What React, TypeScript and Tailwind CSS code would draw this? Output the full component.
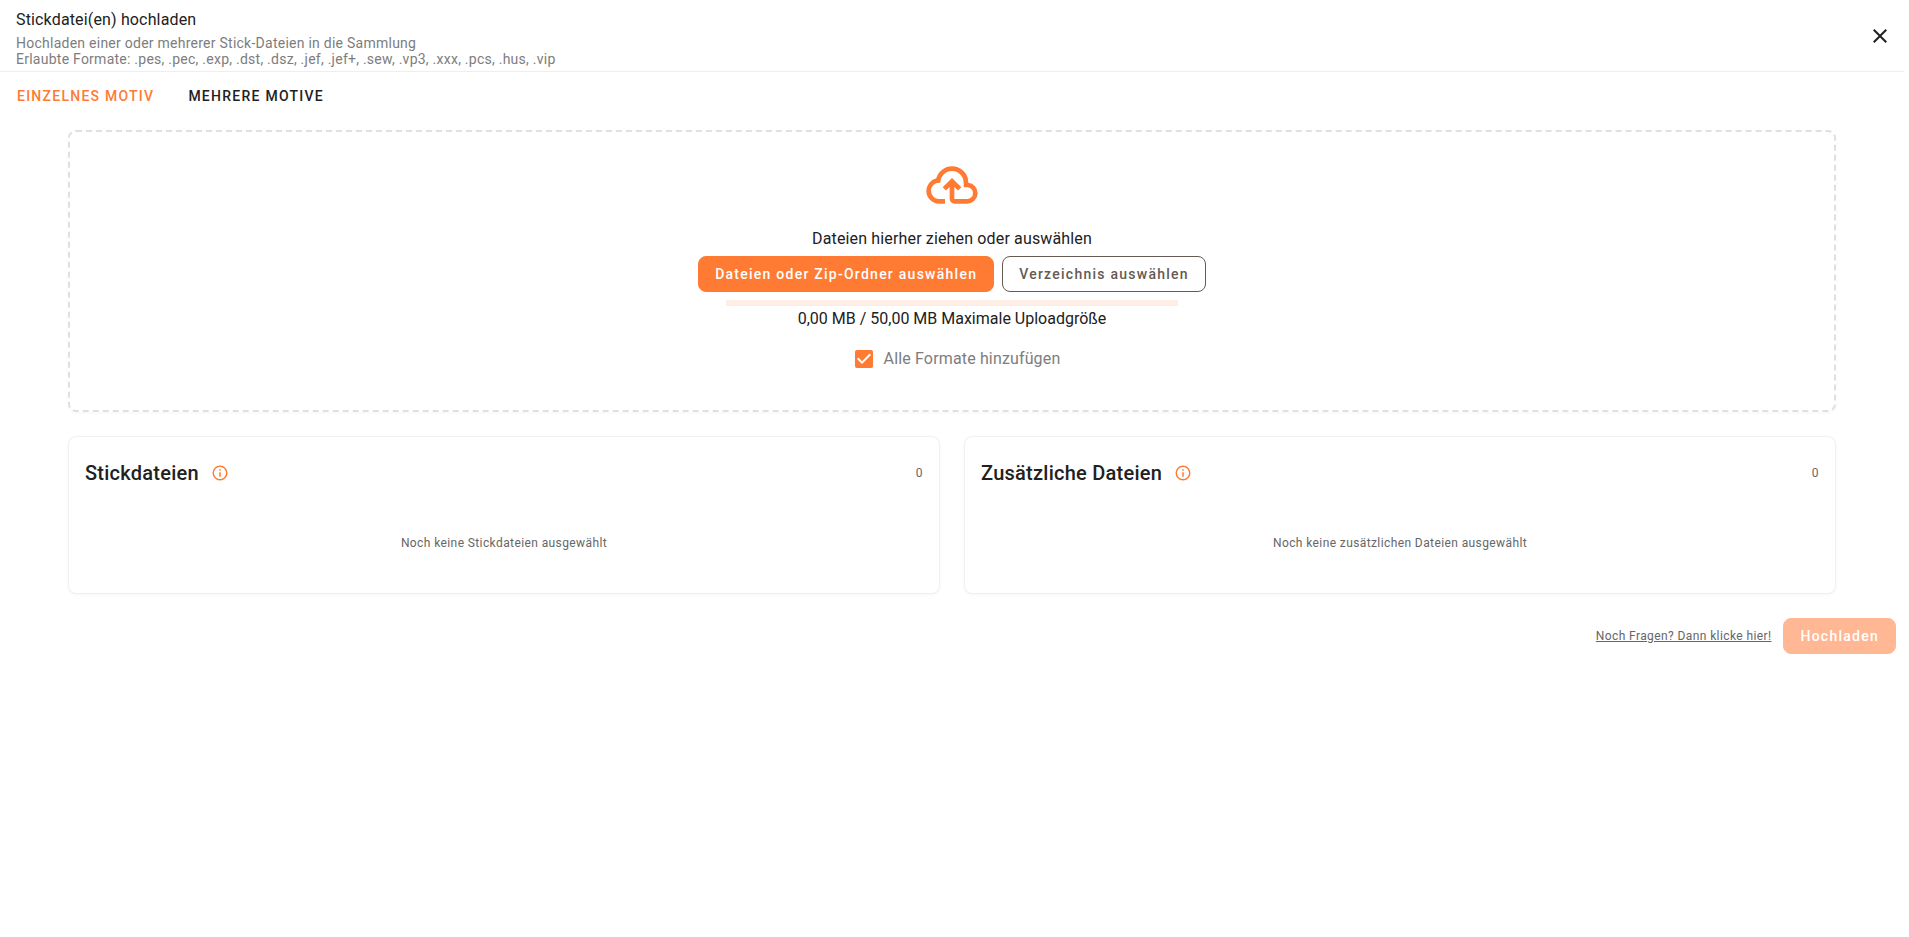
import React, { useState } from "react";

const paths = {
  cloudUpload:
    "M6.5 20Q4.22 20 2.61 18.43 1 16.85 1 14.58 1 12.63 2.17 11.1 3.35 9.57 5.25 9.15 5.88 6.85 7.75 5.43 9.63 4 12 4 14.93 4 16.96 6.04 19 8.07 19 11 20.73 11.2 21.86 12.5 23 13.78 23 15.5 23 17.38 21.69 18.69 20.38 20 18.5 20H13Q12.18 20 11.59 19.41 11 18.83 11 18V12.85L9.4 14.4L8 13L12 9L16 13L14.6 14.4L13 12.85V18H18.5Q19.55 18 20.27 17.27 21 16.55 21 15.5 21 14.45 20.27 13.73 19.55 13 18.5 13H17V11Q17 8.93 15.54 7.46 14.08 6 12 6 9.93 6 8.46 7.46 7 8.93 7 11H6.5Q5.05 11 4.03 12.03 3 13.05 3 14.5 3 15.95 4.03 17 5.05 18 6.5 18H9V20Z",
  info: "M11,9H13V7H11M12,20C7.59,20 4,16.41 4,12C4,7.59 7.59,4 12,4C16.41,4 20,7.59 20,12C20,16.41 16.41,20 12,20M12,2A10,10 0 0,0 2,12A10,10 0 0,0 12,22A10,10 0 0,0 22,12A10,10 0 0,0 12,2M11,17H13V11H11V17Z",
  close:
    "M19,6.41L17.59,5L12,10.59L6.41,5L5,6.41L10.59,12L5,17.59L6.41,19L12,13.41L17.59,19L19,17.59L13.41,12L19,6.41Z",
  check: "M10,17L5,12L6.41,10.58L10,14.17L17.59,6.58L19,8Z",
};

function Icon({ path, className }: { path: string; className: string }) {
  return (
    <svg viewBox="0 0 24 24" fill="currentColor" aria-hidden="true" className={className}>
      <path d={path} />
    </svg>
  );
}

function FileCard({ title, empty, count }: { title: string; empty: string; count: number }) {
  return (
    <section className="min-w-0 flex-1 rounded-lg border border-[#f0f0f0] bg-white px-4 pt-5 pb-10 shadow-[0_1px_3px_rgba(0,0,0,0.04)]">
      <header className="flex h-8 items-center">
        <h2 className="text-xl font-medium tracking-[0.0125em]">{title}</h2>
        <button type="button" aria-label={`Info: ${title}`} className="ml-3 text-[#ff7b33]">
          <Icon path={paths.info} className="size-[18px]" />
        </button>
        <span className="ml-auto text-xs tracking-[0.0333em] text-[#666]">{count}</span>
      </header>
      <p className="mt-11 text-center text-xs leading-5 tracking-[0.0333em] text-[#666]">{empty}</p>
    </section>
  );
}

export default function App() {
  const [tab, setTab] = useState(0);
  const [allFormats, setAllFormats] = useState(true);
  const tabs = ["Einzelnes Motiv", "Mehrere Motive"];

  return (
    <div className="min-h-screen bg-white pr-[5px] font-[Roboto,sans-serif] text-[#212121]">
      <header className="flex items-center justify-between border-b border-[#eee] pr-3">
        <div className="pt-2 pb-1 pl-4">
          <h1 className="text-base leading-6 tracking-[0.0094em]">Stickdatei(en) hochladen</h1>
          <p className="mt-[3px] text-sm leading-4 tracking-[0.0179em] text-[#7d7d7d]">
            Hochladen einer oder mehrerer Stick-Dateien in die Sammlung
            <br />
            Erlaubte Formate: .pes, .pec, .exp, .dst, .dsz, .jef, .jef+, .sew, .vp3, .xxx, .pcs, .hus, .vip
          </p>
        </div>
        <button type="button" aria-label="Schließen">
          <Icon path={paths.close} className="size-6" />
        </button>
      </header>

      <nav className="flex h-12 items-center">
        {tabs.map((label, i) => (
          <button
            key={label}
            type="button"
            onClick={() => setTab(i)}
            className={
              "border border-transparent px-4 text-sm font-medium uppercase tracking-[0.0893em] " +
              (tab === i ? "text-[#ff7b33]" : "text-[#212121]")
            }
          >
            {label}
          </button>
        ))}
      </nav>

      <main className="px-[68px] pt-[10px]">
        <section className="flex flex-col items-center rounded-lg border-2 border-dashed border-[#e0e0e0] px-4 pt-[25px] pb-[39px] shadow-[0_1px_3px_rgba(0,0,0,0.04)]">
          <Icon path={paths.cloudUpload} className="size-14 text-[#ff7b33]" />
          <p className="mt-[14px] text-base leading-6 tracking-[0.0094em]">
            Dateien hierher ziehen oder auswählen
          </p>
          <div className="mt-[5px] flex gap-2">
            <button
              type="button"
              className="h-9 rounded-lg border border-[#ff7b33] bg-[#ff7b33] px-4 text-sm font-medium tracking-[0.0893em] text-white"
            >
              Dateien oder Zip-Ordner auswählen
            </button>
            <button
              type="button"
              className="h-9 rounded-lg border border-[#655a54] px-4 text-sm font-medium tracking-[0.0893em] text-[#655a54]"
            >
              Verzeichnis auswählen
            </button>
          </div>
          <div
            role="progressbar"
            aria-label="Uploadgröße"
            aria-valuenow={0}
            className="mt-2 h-[6px] w-[452px] max-w-full bg-[#ffeee6]"
          />
          <p className="text-base leading-[26px]">0,00 MB / 50,00 MB Maximale Uploadgröße</p>
          <label className="mt-[15px] flex h-6 items-center gap-2 pl-2 text-base tracking-[0.0094em] text-[#7d7d7d]">
            <span className="grid size-6 place-items-center">
              <input
                type="checkbox"
                checked={allFormats}
                onChange={(e) => setAllFormats(e.target.checked)}
                className="peer col-start-1 row-start-1 size-[18px] appearance-none rounded-xs border-2 border-[#7d7d7d] checked:border-[#ff7b33] checked:bg-[#ff7b33]"
              />
              <Icon
                path={paths.check}
                className="pointer-events-none col-start-1 row-start-1 hidden size-6 text-white peer-checked:block"
              />
            </span>
            Alle Formate hinzufügen
          </label>
        </section>

        <div className="mt-6 flex gap-6">
          <FileCard title="Stickdateien" empty="Noch keine Stickdateien ausgewählt" count={0} />
          <FileCard title="Zusätzliche Dateien" empty="Noch keine zusätzlichen Dateien ausgewählt" count={0} />
        </div>
      </main>

      <footer className="mt-6 flex items-center justify-end gap-3 pr-2">
        <a href="#hilfe" className="text-xs tracking-[0.0333em] text-[#666] underline">
          Noch Fragen? Dann klicke hier!
        </a>
        <button
          type="button"
          disabled
          className="h-9 rounded-lg border border-[#ffb794] bg-[#ffb794] px-4 text-sm font-medium tracking-[0.0893em] text-white"
        >
          Hochladen
        </button>
      </footer>
    </div>
  );
}
